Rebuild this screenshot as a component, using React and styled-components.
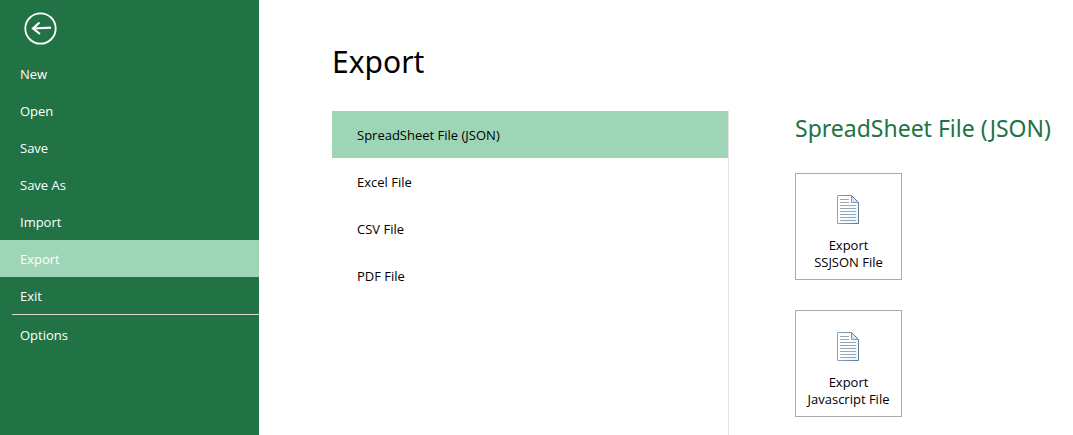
import React, { useState } from "react";
import styled, { createGlobalStyle } from "styled-components";

const GlobalStyle = createGlobalStyle`
  * { box-sizing: border-box; }
  body {
    margin: 0;
    background: #fff;
    color: #000;
    font: 13px/17px "Segoe UI", "Open Sans", "Noto Sans", sans-serif;
  }
  h1, h2 { font-family: "Segoe UI", "Noto Sans", "Open Sans", sans-serif; }
  button { font: inherit; color: inherit; cursor: pointer; }
`;

const Screen = styled.div`
  display: flex;
  min-height: 100vh;
`;

const Sidebar = styled.nav`
  flex: 0 0 259px;
  background: #217346;
  color: #fff;
`;

const BackButton = styled.button`
  display: block;
  margin: 12px 0 10px 24px;
  padding: 0;
  border: 0;
  background: none;
  svg { display: block; }
`;

const MenuItem = styled.button`
  display: block;
  width: 100%;
  height: 37px;
  padding: 2px 20px 0;
  border: 0;
  text-align: left;
  background: ${(p) => (p.$active ? "#9fd5b7" : "transparent")};
`;

const Divider = styled.hr`
  height: 1px;
  margin: 0 0 1px 12px;
  border: 0;
  background: #d8d8d8;
`;

const Main = styled.main`
  flex: 1;
  min-width: 0;
  display: flex;
  flex-direction: column;
  padding-left: 73px;
`;

const Title = styled.h1`
  margin: 0;
  padding: 42px 0 29px;
  font-size: 30px;
  line-height: 40px;
  font-weight: 400;
`;

const Columns = styled.div`
  flex: 1;
  display: grid;
  grid-template-columns: minmax(0, 397px) 1fr;
`;

const FormatList = styled.div`
  border-right: 1px solid #e1e1e1;
`;

const FormatItem = styled.button`
  display: block;
  width: 100%;
  height: 47px;
  padding: 2px 25px 0;
  border: 0;
  text-align: left;
  background: ${(p) => (p.$active ? "#9fd5b7" : "transparent")};
`;

const Detail = styled.section`
  padding: 1px 0 18px 66px;
`;

const DetailTitle = styled.h2`
  margin: 0 0 29px;
  font-size: 23px;
  line-height: 32px;
  font-weight: 400;
  color: #217346;
  white-space: nowrap;
`;

const Actions = styled.div`
  display: flex;
  flex-direction: column;
  gap: 30px;
`;

const ActionButton = styled.button`
  display: flex;
  flex-direction: column;
  align-items: center;
  width: 107px;
  height: 107px;
  padding: 21px 0 0;
  border: 1px solid #ababab;
  background: #fff;
  white-space: nowrap;
  svg { margin: 0 2px 13px 0; flex: none; }
`;

const BackIcon = () => (
  <svg width="33" height="33" viewBox="0 0 33 33" fill="none" stroke="#fff" aria-hidden="true">
    <circle cx="16.5" cy="16.5" r="15.2" strokeWidth="1.8" />
    <path d="M27 15.6L9 16.5M15.5 10.5L9 16.5L16 22" strokeWidth="2.2" />
  </svg>
);

const DocumentIcon = () => (
  <svg width="22" height="29" viewBox="0 0 22 29" fill="none" aria-hidden="true">
    <defs>
      <linearGradient id="edge" x1="0" y1="0" x2="1" y2="0">
        <stop offset="0" stopColor="#8fa5bf" />
        <stop offset="1" stopColor="#5f7894" />
      </linearGradient>
      <linearGradient id="paper" x1="0" y1="0" x2="1" y2="1">
        <stop offset="0.5" stopColor="#fff" />
        <stop offset="1" stopColor="#e4effb" />
      </linearGradient>
    </defs>
    <path d="M0.5 0.5H14.5L21.5 7.5V28.5H0.5Z" fill="url(#paper)" stroke="url(#edge)" />
    <path d="M14.5 0.5V7.5H21.5Z" fill="#dbe5f1" stroke="#7f97b3" />
    <path d="M15 1L21 7" stroke="#405a7c" strokeDasharray="1 1" />
    <path
      d="M3 4.5H12M3 7.5H12M3 10.5H19M3 13.5H19M3 16.5H19M3 19.5H19M3 22.5H19M3 25.5H19"
      stroke="#93a8bd"
    />
  </svg>
);

const menu = ["New", "Open", "Save", "Save As", "Import", "Export", "Exit"];
const formats = ["SpreadSheet File (JSON)", "Excel File", "CSV File", "PDF File"];
const actions = ["SSJSON File", "Javascript File"];

export default function App() {
  const [format, setFormat] = useState(formats[0]);
  return (
    <>
      <GlobalStyle />
      <Screen>
        <Sidebar>
          <BackButton type="button" aria-label="Back">
            <BackIcon />
          </BackButton>
          {menu.map((label) => (
            <MenuItem key={label} type="button" $active={label === "Export"}>
              {label}
            </MenuItem>
          ))}
          <Divider />
          <MenuItem type="button">Options</MenuItem>
        </Sidebar>
        <Main>
          <Title>Export</Title>
          <Columns>
            <FormatList>
              {formats.map((label) => (
                <FormatItem
                  key={label}
                  type="button"
                  $active={label === format}
                  onClick={() => setFormat(label)}
                >
                  {label}
                </FormatItem>
              ))}
            </FormatList>
            <Detail>
              <DetailTitle>{format}</DetailTitle>
              <Actions>
                {actions.map((label) => (
                  <ActionButton key={label} type="button">
                    <DocumentIcon />
                    <span>Export</span>
                    <span>{label}</span>
                  </ActionButton>
                ))}
              </Actions>
            </Detail>
          </Columns>
        </Main>
      </Screen>
    </>
  );
}
